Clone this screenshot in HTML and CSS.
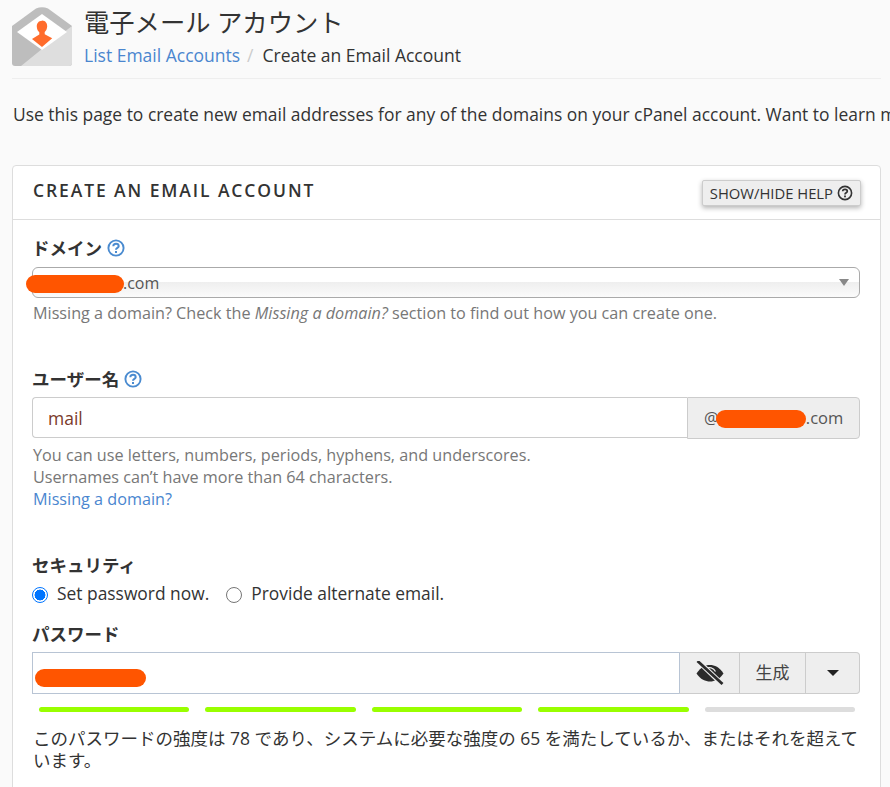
FILE: index.html
```html
<!DOCTYPE html>
<html lang="ja">
<head>
<meta charset="utf-8">
<title>電子メール アカウント</title>
<link rel="stylesheet" href="styles.css">
</head>
<body>
<div class="page">
  <header class="head">
    <svg class="logo" width="60" height="60" viewBox="0 0 60 60">
      <path d="M0 19 L24 1.500 Q30 -1 36 1.500 L60 19 V56 Q60 59 57 59 H3 Q0 59 0 56 Z" fill="#bdbdbd"/>
      <path d="M30 42 L60 19 V56 Q60 59 57 59 H9 Z" fill="#dedede"/>
      <path d="M5 25 L30 7 L55 25 L30 43 Z" fill="#fff"/>
      <path d="M30 13.500 c3.600 0 5.400 3 5.200 6 c-.2 2.700-1.300 4.500-2.500 5.500 v2.300 l7.500 4 L30 40 L20 32 l7.300-4.500 v-2.300 c-1.300-1-2.400-2.800-2.500-5.500 c-.2-3 1.600-6 5.200-6 Z" fill="#ff6c2c"/>
    </svg>
    <div class="head-text">
      <h1 class="title">電子メール アカウント</h1>
      <nav class="crumbs"><a class="link" href="#">List Email Accounts</a><span class="sep">/</span><span class="here">Create an Email Account</span></nav>
    </div>
  </header>
  <p class="intro">Use this page to create new email addresses for any of the domains on your cPanel account. Want to learn more? Read our documentation.</p>

  <section class="card">
    <div class="card-head">
      <h2 class="card-title">CREATE AN EMAIL ACCOUNT</h2>
      <button class="help-btn" type="button">SHOW/HIDE HELP
        <svg width="16" height="16" viewBox="0 0 16 16"><circle cx="8" cy="8" r="6.600" fill="none" stroke="#333" stroke-width="1.600"/><path d="M5.700 6.300 C5.700 3.600 10.300 3.700 10.300 6.300 C10.300 7.900 8 7.700 8 9.500" fill="none" stroke="#333" stroke-width="1.700"/><rect x="7.100" y="10.500" width="1.800" height="1.800" fill="#333"/></svg>
      </button>
    </div>
    <div class="card-body">
      <div class="field field-domain">
        <label class="label">ドメイン
          <svg class="q" width="18" height="18" viewBox="0 0 18 18"><circle cx="9" cy="9" r="7.600" fill="none" stroke="#4a8bd0" stroke-width="1.900"/><path d="M6.300 7.200 C6.300 4 11.700 4.100 11.700 7.200 C11.700 9 9 8.800 9 10.800" fill="none" stroke="#4a8bd0" stroke-width="2"/><rect x="8" y="12" width="2" height="2" fill="#4a8bd0"/></svg>
        </label>
        <div class="select"><span class="select-value">.com</span><span class="select-caret"></span><span class="redact redact-domain"></span></div>
        <p class="hint">Missing a domain? Check the <em>Missing a domain?</em> section to find out how you can create one.</p>
      </div>

      <div class="field field-user">
        <label class="label">ユーザー名
          <svg class="q" width="18" height="18" viewBox="0 0 18 18"><circle cx="9" cy="9" r="7.600" fill="none" stroke="#4a8bd0" stroke-width="1.900"/><path d="M6.300 7.200 C6.300 4 11.700 4.100 11.700 7.200 C11.700 9 9 8.800 9 10.800" fill="none" stroke="#4a8bd0" stroke-width="2"/><rect x="8" y="12" width="2" height="2" fill="#4a8bd0"/></svg>
        </label>
        <div class="input-group">
          <input class="input" type="text" value="mail">
          <span class="addon">@<span class="addon-mid"></span>.com<span class="redact redact-at"></span></span>
        </div>
        <p class="hint hint-multi">You can use letters, numbers, periods, hyphens, and underscores.<br>Usernames can’t have more than 64 characters.<br><a class="link" href="#">Missing a domain?</a></p>
      </div>

      <div class="field field-sec">
        <div class="label">セキュリティ</div>
        <div class="radios">
          <label class="radio"><span class="dot dot-on"></span>Set password now.</label>
          <label class="radio"><span class="dot"></span>Provide alternate email.</label>
        </div>
      </div>

      <div class="field field-pass">
        <div class="label">パスワード</div>
        <div class="pass-group">
          <div class="pass-input"><span class="redact redact-pass"></span></div>
          <span class="pass-btn pass-eye">
            <svg width="30" height="24" viewBox="0 0 30 24"><path d="M1.500 12.500 C6 5.500 11 4 15 4 C19.500 4 24.500 6 28.500 12.500 C24.500 18.500 19.500 20.500 15 20.500 C10.500 20.500 5.500 18.500 1.500 12.500 Z" fill="#2b2b2b"/><path d="M11.500 7.500 C14 6 18.500 6.500 20.500 10.500" fill="none" stroke="#eee" stroke-width="1.200"/><path d="M4 1 L27 23" stroke="#eee" stroke-width="5"/><path d="M2.500 0 L27.500 23" stroke="#2b2b2b" stroke-width="2.800"/></svg>
          </span>
          <span class="pass-btn pass-gen">生成</span>
          <span class="pass-btn pass-more"><span class="caret"></span></span>
        </div>
        <div class="meter">
          <span class="seg seg-on"></span><span class="seg seg-on"></span><span class="seg seg-on"></span><span class="seg seg-on"></span><span class="seg"></span>
        </div>
        <p class="strength">このパスワードの強度は 78 であり、システムに必要な強度の 65 を満たしているか、またはそれを超えています。</p>
      </div>
    </div>
  </section>
</div>
</body>
</html>
```

FILE: styles.css
```css
* { box-sizing: border-box; }
html, body { margin: 0; height: 787px; overflow: hidden; }
body {
  background: #fafafa;
  color: #333;
  font-family: "Open Sans", "Noto Sans CJK JP", sans-serif;
  font-size: 16px;
  line-height: 22px;
}
.page { width: 890px; padding: 0 9px 0 12px; }
.head {
  display: flex;
  gap: 12px;
  height: 79px;
  padding-top: 7px;
  border-bottom: 1px solid #eee;
}
.logo { flex: none; }
.head-text { min-width: 0; }
.title {
  margin: 0;
  font-size: 25.300px;
  font-weight: 400;
  line-height: 30px;
  color: #333;
}
.crumbs { margin-top: 6px; font-size: 17.500px; line-height: 24px; }
.link { color: #4a86cf; text-decoration: none; }
.sep { color: #ccc; margin: 0 9px 0 7px; }
.here { color: #333; }
.intro {
  margin: 24px 0 0 1px;
  font-size: 17.450px;
  white-space: nowrap;
}
.card {
  margin-top: 40px;
  width: 869px;
  background: #fff;
  border: 1px solid #ddd;
  border-radius: 4px;
  padding-bottom: 40px;
}
.card-head {
  display: flex;
  justify-content: space-between;
  height: 54px;
  padding: 14px 19px 0 20px;
  border-bottom: 1px solid #ddd;
}
.card-title {
  margin: 0;
  font-size: 17.500px;
  font-weight: 600;
  letter-spacing: 1.900px;
  line-height: 20px;
}
.help-btn {
  display: flex;
  align-items: center;
  gap: 4px;
  height: 26px;
  padding: 0 7px;
  background: #eee;
  border: 1px solid #ccc;
  border-radius: 2px;
  box-shadow: 0 2px 5px rgba(0,0,0,.3);
  color: #333;
  font: 400 14.800px "Open Sans", sans-serif;
}
.card-body { padding: 0 20px 0 19px; }
.field { position: relative; }
.field-domain { padding-top: 16px; }
.field-user { padding-top: 43px; }
.field-sec { padding-top: 43px; }
.field-pass { padding-top: 17px; }
.label {
  display: flex;
  align-items: center;
  gap: 5px;
  height: 24px;
  font-size: 17.500px;
  font-weight: 700;
  color: #333;
}
.select {
  position: relative;
  display: flex;
  align-items: center;
  justify-content: space-between;
  height: 31px;
  margin-top: 7px;
  padding: 0 10px 0 90px;
  border: 1px solid #aaa;
  border-radius: 6px;
  background: linear-gradient(#fff 0, #fff 48%, #eee 48%, #fbfbfb 100%);
  font-size: 16px;
  color: #555;
}
.select-caret {
  width: 0; height: 0;
  border-left: 5px solid transparent;
  border-right: 5px solid transparent;
  border-top: 7px solid #888;
}
.redact { position: absolute; background: #f50; border-radius: 9px; }
.redact-domain { left: -7px; top: 7px; width: 98px; height: 18px; }
.redact-at { left: 28px; top: 12px; width: 90px; height: 18px; }
.redact-pass { left: 2px; top: 16px; width: 111px; height: 18px; }
.hint {
  margin: 4px 0 0 1px;
  color: #777;
  font-size: 16.200px;
  line-height: 22px;
}
.hint-multi { margin-top: 5px; }
.input-group { display: flex; height: 42px; margin-top: 6px; }
.input {
  flex: 1;
  min-width: 0;
  height: 41px;
  padding: 0 15px;
  border: 1px solid #ccc;
  border-right: 0;
  border-radius: 4px 0 0 4px;
  background: #fff;
  color: #7a3a2a;
  font: 400 17.500px "Open Sans", sans-serif;
  outline: 0;
}
.addon {
  position: relative;
  flex: none;
  display: flex;
  align-items: center;
  width: 173px;
  padding-left: 16px;
  background: #eee;
  border: 1px solid #ccc;
  border-radius: 0 4px 4px 0;
  color: #555;
  font-size: 16.500px;
}
.addon-mid { width: 87px; }
.radios { display: flex; gap: 17px; margin-top: 4px; height: 24px; align-items: center; font-size: 17.400px; }
.radio { display: flex; align-items: center; gap: 9px; }
.dot {
  width: 16px; height: 16px; margin-top: 3px;
  border: 1px solid #767676;
  border-radius: 50%;
  background: #fff;
}
.dot-on {
  border: 1.500px solid #0075ff;
  background: radial-gradient(circle, #0075ff 0, #0075ff 5.200px, #fff 5.700px);
}
.pass-group { display: flex; height: 42px; margin-top: 6px; }
.pass-input {
  position: relative;
  flex: 1;
  border: 1px solid #b8c4d4;
  border-right: 0;
  background: #fff;
}
.pass-btn {
  display: flex;
  align-items: center;
  justify-content: center;
  flex: none;
  background: #eee;
  border: 1px solid #ccc;
  border-left: 0;
}
.pass-eye { width: 61px; border-left: 1px solid #b8c4d4; }
.pass-gen { width: 66px; font-size: 17px; color: #444; }
.pass-more { width: 54px; border-radius: 0 4px 4px 0; }
.caret {
  width: 0; height: 0;
  border-left: 6px solid transparent;
  border-right: 6px solid transparent;
  border-top: 6px solid #222;
}
.meter { display: flex; gap: 16px; margin: 13px 5px 0 7px; }
.seg { flex: 1; height: 5px; border-radius: 3px; background: #ddd; }
.seg-on { background: #9f0; }
.strength { margin: 15px 0 0 1px; font-size: 17.500px; line-height: 22px; color: #333; }
```
